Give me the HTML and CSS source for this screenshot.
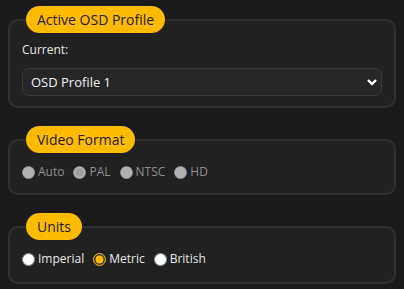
FILE: index.html
```html
<!DOCTYPE html>
<html lang="en">
<head>
    <meta charset="UTF-8">
    <meta name="viewport" content="width=device-width, initial-scale=1.0">
    <title>OSD</title>
    <link rel="stylesheet" href="styles.css">
</head>
<body>

    <!-- Perfil ativo -->
    <fieldset class="group">
        <legend class="pill">Active OSD Profile</legend>
        <label class="field-label" for="profile">Current:</label>
        <div class="select-wrap">
            <select id="profile">
                <option>OSD Profile 1</option>
                <option>OSD Profile 2</option>
                <option>OSD Profile 3</option>
            </select>
            <svg class="chevron" width="12" height="8" viewBox="0 0 12 8">
                <path d="M2 2 L6 6 L10 2" fill="none" stroke="#fff" stroke-width="2.4"/>
            </svg>
        </div>
    </fieldset>

    <!-- Formato de video -->
    <fieldset class="group">
        <legend class="pill">Video Format</legend>
        <div class="radios disabled">
            <label><input type="radio" name="video" disabled>Auto</label>
            <label><input type="radio" name="video" checked disabled>PAL</label>
            <label><input type="radio" name="video" disabled>NTSC</label>
            <label><input type="radio" name="video" disabled>HD</label>
        </div>
    </fieldset>

    <!-- Unidades -->
    <fieldset class="group">
        <legend class="pill">Units</legend>
        <div class="radios">
            <label><input type="radio" name="units">Imperial</label>
            <label><input type="radio" name="units" checked>Metric</label>
            <label><input type="radio" name="units">British</label>
        </div>
    </fieldset>

</body>
</html>
```

FILE: styles.css
```css
body {
    margin: 0;
    padding: 6px 8px;
    background-color: #1a1a1a;
    color: #e8e8e8;
    font-family: "Open Sans", "Noto Sans", sans-serif;
    font-size: 12px;
}

.group {
    margin: 0 0 18px 0;
    padding: 0 12px 10px 12px;
    border: 2px solid #303030;
    border-radius: 10px;
    background-color: #212121;
    min-width: 0;
}

.group:last-child {
    margin-bottom: 0;
    padding-bottom: 12px;
}

.pill {
    margin-left: 4px;
    padding: 0 11px;
    height: 27px;
    line-height: 27px;
    border-radius: 14px;
    background-color: #ffbb00;
    color: #1a1a1a;
    font-size: 14px;
    font-weight: 500;
}

.field-label {
    display: block;
    margin: 9px 0 10px 0;
    line-height: 16px;
}

.select-wrap {
    position: relative;
}

.select-wrap select {
    appearance: none;
    display: block;
    width: 100%;
    height: 28px;
    padding: 0 8px;
    border: 1px solid #3a3a3a;
    border-radius: 7px;
    background-color: #262626;
    color: #f2f2f2;
    font-family: inherit;
    font-size: 13px;
}

.chevron {
    position: absolute;
    right: 4px;
    top: 10px;
}

.radios {
    display: flex;
    align-items: center;
    padding: 11px 0 3px 0;
}

.radios label {
    display: flex;
    align-items: center;
    margin-right: 9px;
    line-height: 16px;
}

.radios input {
    margin: 0 3px 0 0;
    width: 13px;
    height: 13px;
    accent-color: #ffbb00;
}

.radios.disabled label {
    color: #8f8f8f;
}
```
